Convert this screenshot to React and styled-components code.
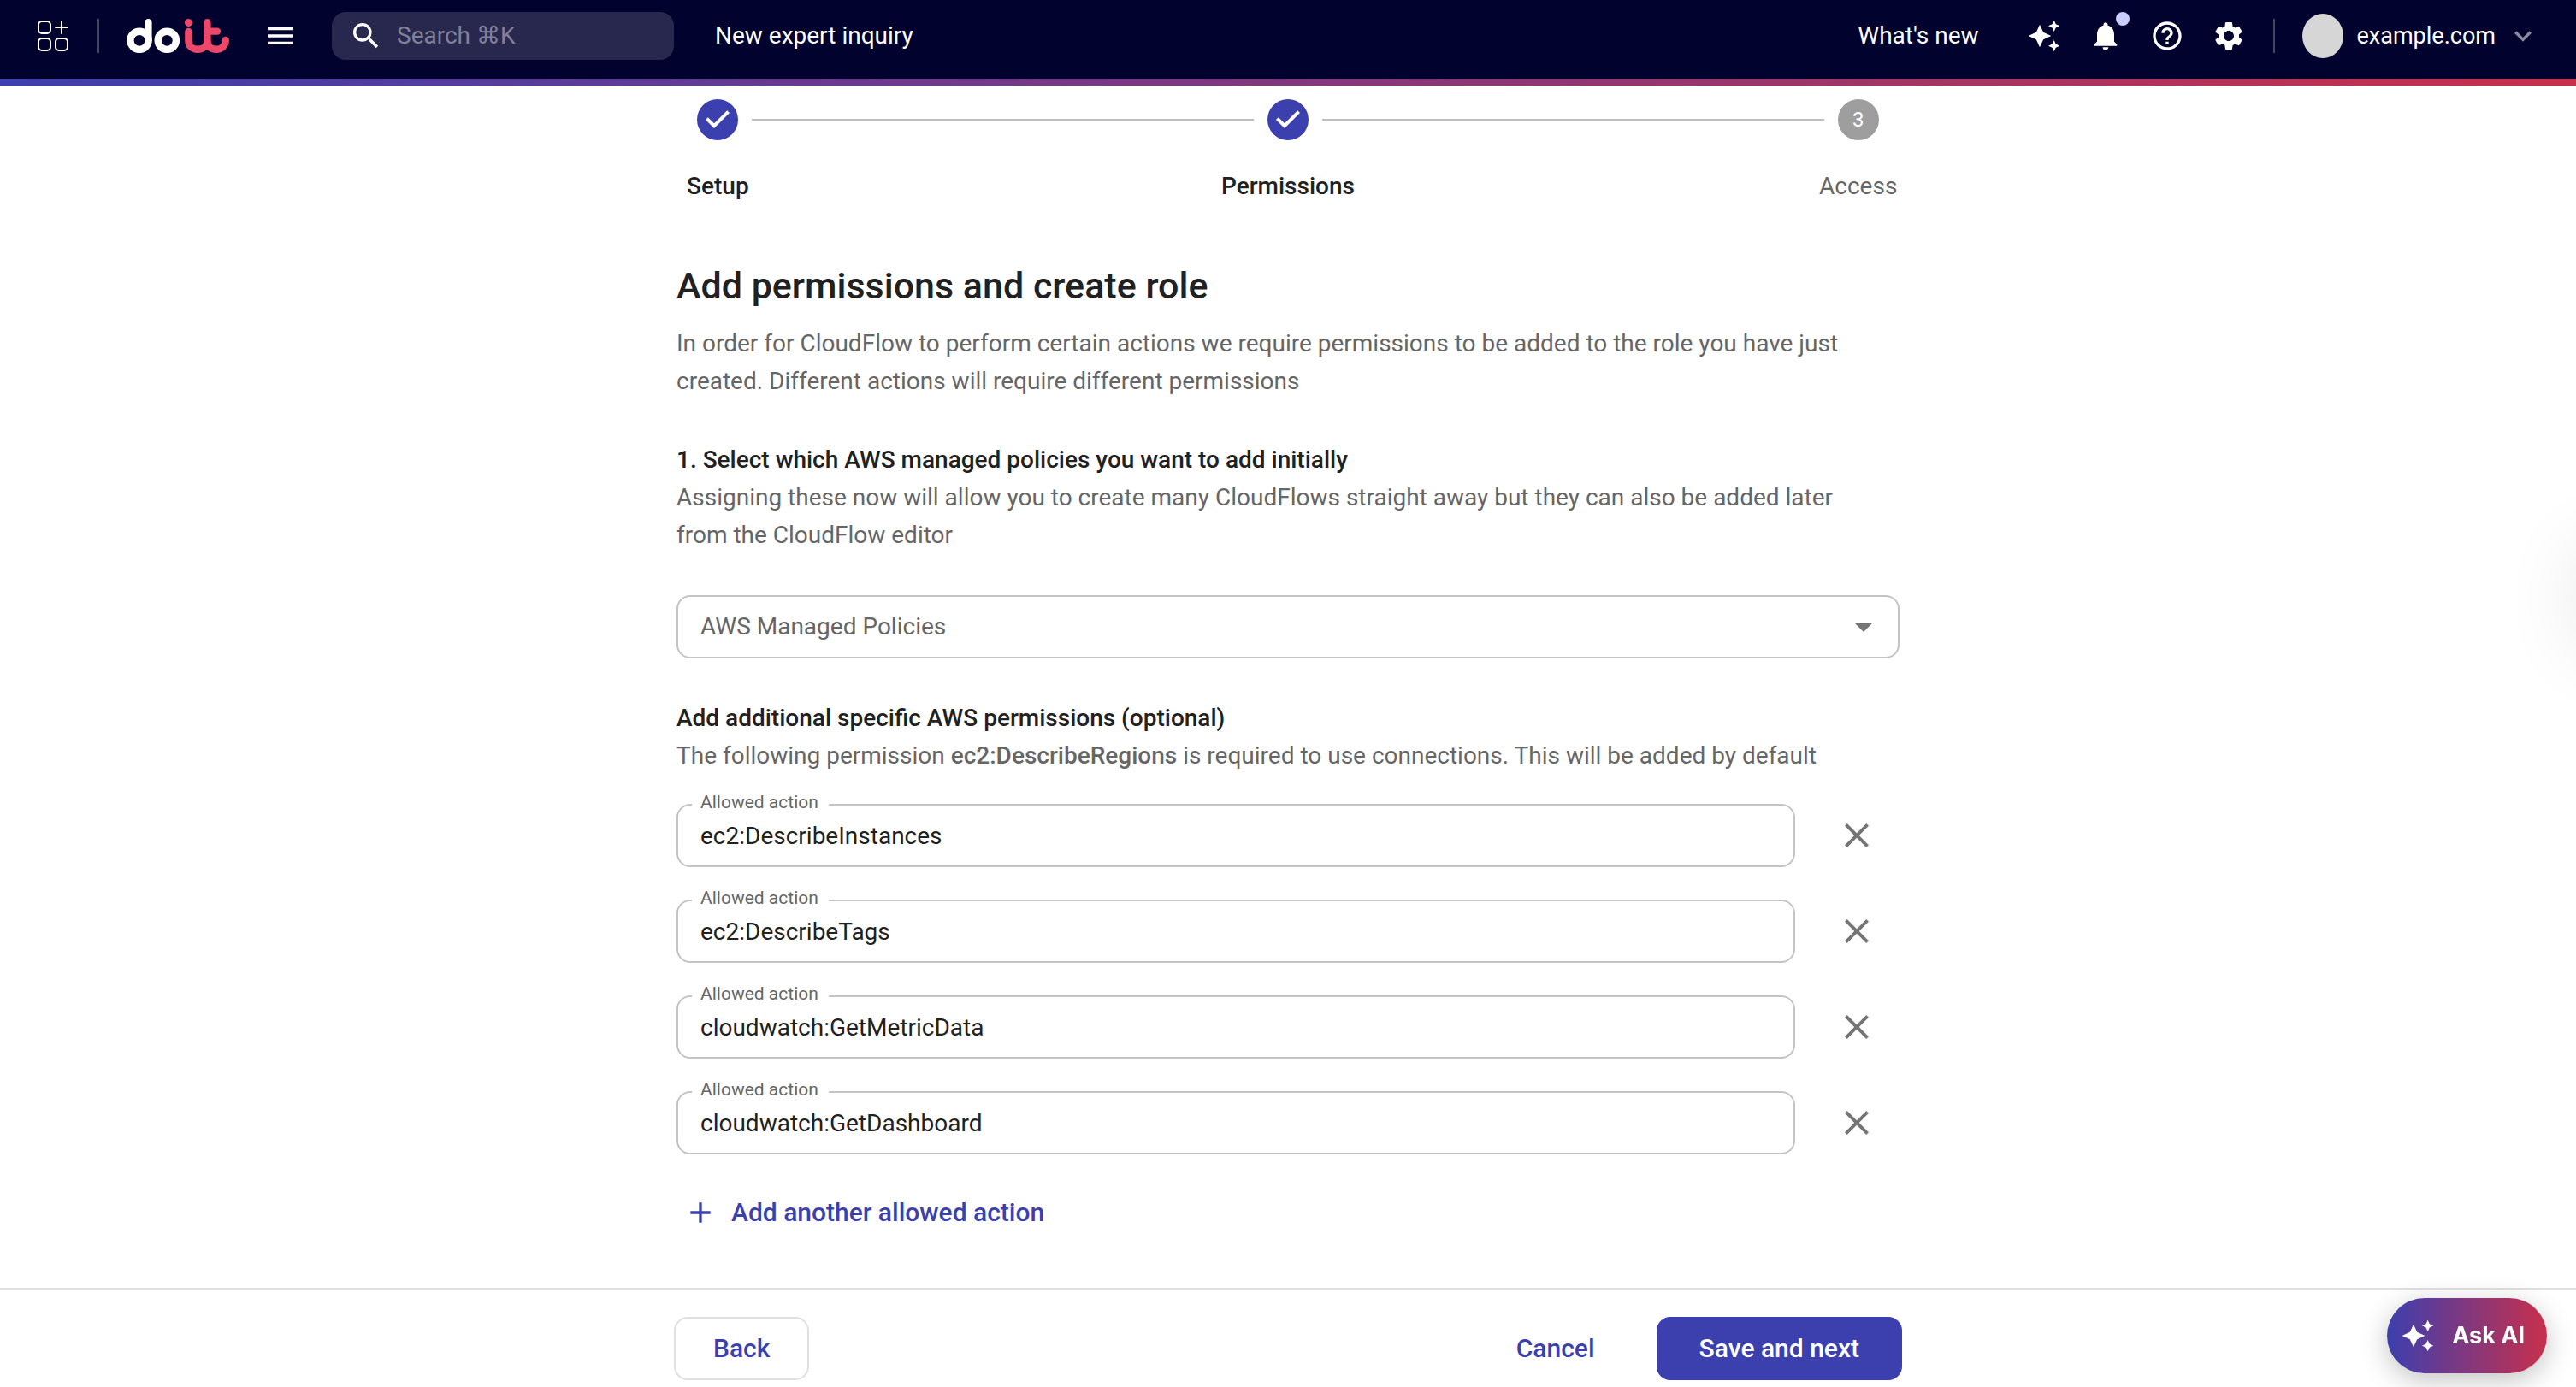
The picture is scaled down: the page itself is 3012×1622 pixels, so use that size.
import React, { useState } from 'react'

import styled, { createGlobalStyle, css } from 'styled-components'

import {
	MdAdd,
	MdArrowDropDown,
	MdAutoAwesome,
	MdClose,
	MdHelpOutline,
	MdKeyboardArrowDown,
	MdMenu,
	MdNotifications,
	MdSearch,
	MdSettings,
} from 'react-icons/md'

const GlobalStyle = createGlobalStyle`
	* {
		box-sizing: border-box;
	}

	body {
		margin: 0;
		background: #ffffff;
		color: #212121;
		font-family: Roboto, 'Liberation Sans', sans-serif;
		font-size: 28px;
		line-height: 44px;
	}

	button,
	input,
	select {
		font: inherit;
	}
`

const PlainButton = css`
	display: flex;
	align-items: center;
	justify-content: center;
	padding: 0;
	border: none;
	background: none;
	color: inherit;
	cursor: pointer;
`

const Page = styled.div`
	display: flex;
	flex-direction: column;
	min-height: 100vh;
	overflow-x: hidden;
	position: relative;
`

// Top bar
const Header = styled.header`
	background: #02022e;
	color: #ffffff;
`

const HeaderStripe = styled.div`
	height: 8px;
	background: linear-gradient(90deg, #3c3fae, #c8304c);
`

const Toolbar = styled.div`
	display: flex;
	align-items: center;
	justify-content: space-between;
	height: 92px;
	padding: 0 42px 8px;
`

const ToolbarGroup = styled.div`
	display: flex;
	align-items: center;
`

const ToolbarDivider = styled.span`
	width: 2px;
	height: 40px;
	background: #45455f;
	margin: 0 32px;
`

const IconButton = styled.button`
	${PlainButton}
	position: relative;
	font-size: 40px;
`

const MenuButton = styled(IconButton)`
	margin: 0 40px;
`

const IconRow = styled.div`
	display: flex;
	gap: 32px;
	margin-left: 56px;
`

const UnreadDot = styled.span`
	position: absolute;
	top: -8px;
	right: -8px;
	width: 16px;
	height: 16px;
	border-radius: 50%;
	background: #c9cdfc;
`

const SearchBox = styled.label`
	display: flex;
	align-items: center;
	gap: 16px;
	width: 400px;
	height: 56px;
	padding: 0 20px;
	border-radius: 16px;
	background: #28284e;
	font-size: 40px;
`

const SearchInput = styled.input`
	flex: 1;
	min-width: 0;
	border: none;
	outline: none;
	padding: 0;
	background: none;
	color: #ffffff;
	font-size: 28px;

	&::placeholder {
		color: #81819a;
		opacity: 1;
	}
`

const HeaderLink = styled.a`
	color: inherit;
	text-decoration: none;
	margin-left: ${({ $spaced }) => ($spaced ? '48px' : '0')};
`

const AccountButton = styled.button`
	${PlainButton}
	gap: 12px;
	font-size: 27px;

	svg {
		font-size: 40px;
		color: #8a8aa0;
	}
`

const Avatar = styled.span`
	width: 48px;
	height: 52px;
	margin-right: 4px;
	border-radius: 50%;
	background: #d6d6d6;
`

// Steps
const Stepper = styled.ol`
	display: grid;
	grid-template-columns: repeat(3, 1fr);
	width: 100%;
	max-width: 2000px;
	margin: 0 auto;
	padding: 16px 0 0;
	list-style: none;
`

const Step = styled.li`
	display: flex;
	flex-direction: column;
	gap: 32px;
	text-align: center;
	color: ${({ $done }) => ($done ? '#212121' : '#666666')};
	font-weight: ${({ $done }) => ($done ? 500 : 400)};
`

const StepTrack = styled.div`
	display: flex;
	align-items: center;
	gap: 16px;
`

const StepLine = styled.span`
	flex: 1;
	height: 2px;
	background: ${({ $hidden }) => ($hidden ? 'transparent' : '#bdbdbd')};
`

const StepBadge = styled.span`
	display: flex;
	align-items: center;
	justify-content: center;
	width: 48px;
	height: 48px;
	border-radius: 50%;
	background: ${({ $done }) => ($done ? '#3c3fae' : '#9e9e9e')};
	color: #ffffff;
	font-size: 24px;
`

// Form
const Content = styled.main`
	flex: 1;
	width: 100%;
	max-width: 1430px;
	margin: 0 auto;
	padding: 64px 0 52px;
`

const Title = styled.h1`
	margin: 0 0 16px;
	font-size: 43px;
	line-height: 60px;
	font-weight: 500;
`

const Description = styled.p`
	margin: 0 0 ${({ $gap }) => $gap}px;
	padding-right: 32px;
	color: #666666;

	strong {
		font-weight: 500;
	}
`

const Subtitle = styled.h2`
	margin: 0;
	font-size: 28px;
	line-height: 44px;
	font-weight: 500;
`

const SelectBox = styled.div`
	display: grid;
	align-items: center;
	margin-bottom: 48px;

	select,
	svg {
		grid-area: 1 / 1;
	}

	svg {
		justify-self: end;
		margin-right: 18px;
		font-size: 48px;
		color: #757575;
		pointer-events: none;
	}
`

const Select = styled.select`
	appearance: none;
	width: 100%;
	height: 74px;
	padding: 0 26px;
	border: 2px solid #c4c4c4;
	border-radius: 16px;
	background: #ffffff;
	color: #666666;
`

const ActionList = styled.div`
	display: flex;
	flex-direction: column;
	gap: 26px;
`

const ActionRow = styled.div`
	display: flex;
	align-items: flex-end;
	gap: 48px;
	padding-right: 26px;
`

const RemoveButton = styled.button`
	${PlainButton}
	width: 48px;
	height: 74px;
	font-size: 48px;
	color: #757575;
`

const FieldSet = styled.fieldset`
	flex: 1;
	min-width: 0;
	height: 86px;
	margin: 0;
	padding: 0 26px;
	border: 2px solid #c4c4c4;
	border-radius: 16px;
`

const FieldLegend = styled.legend`
	margin-left: -10px;
	padding: 0 12px 6px 10px;
	font-size: 21px;
	line-height: 20px;
	color: #666666;
`

const FieldInput = styled.input`
	display: block;
	width: 100%;
	height: 46px;
	padding: 0;
	border: none;
	outline: none;
	background: none;
	color: #212121;
`

const AddButton = styled.button`
	${PlainButton}
	gap: 16px;
	margin-top: 46px;
	padding: 0 8px;
	color: #3c3fae;
	font-size: 30px;
	font-weight: 500;

	svg {
		font-size: 40px;
	}
`

// Bottom bar
const Footer = styled.footer`
	border-top: 2px solid #e0e0e0;
	padding: 32px 0 8px;
`

const FooterInner = styled.div`
	display: flex;
	align-items: center;
	gap: 24px;
	width: 100%;
	max-width: 1436px;
	margin: 0 auto;
`

const FooterButton = styled.button`
	${PlainButton}
	height: 74px;
	padding: 0 48px;
	border-radius: 16px;
	color: #3c3fae;
	font-size: 30px;
	font-weight: 500;
`

const BackButton = styled(FooterButton)`
	margin-right: auto;
	padding: 0 44px;
	border: 2px solid #e0e0e0;
`

const SaveButton = styled(FooterButton)`
	padding: 0 50px;
	background: #3c3fae;
	color: #ffffff;
`

const AskButton = styled.button`
	${PlainButton}
	position: fixed;
	right: 34px;
	bottom: 16px;
	gap: 20px;
	height: 88px;
	padding: 0 26px 0 16px;
	border-radius: 44px;
	background: linear-gradient(90deg, #3c3fae, #c8304c);
	box-shadow: 0 8px 32px rgba(0, 0, 0, 0.24);
	color: #ffffff;
	font-family: Inter, Roboto, sans-serif;
	font-size: 27px;
	font-weight: 700;

	svg {
		font-size: 40px;
	}
`

// Edge of the collapsed side drawer
const DrawerShadow = styled.div`
	position: absolute;
	top: 652px;
	right: -112px;
	width: 96px;
	height: 96px;
	border-radius: 50%;
	box-shadow: 0 0 104px rgba(0, 0, 0, 0.2);
`

const AppsIcon = () => (
	<svg width='40' height='36' viewBox='0 0 40 36' fill='none' stroke='currentColor' strokeWidth='2'>
		<rect x='3' y='1' width='14' height='14' rx='4' />
		<rect x='3' y='21' width='14' height='14' rx='4' />
		<rect x='23' y='21' width='14' height='14' rx='4' />
		<path d='M30 1v14M23 8h14' strokeLinecap='round' />
	</svg>
)

const Logo = () => (
	<svg width='120' height='40' viewBox='0 0 120 40' fill='none' strokeWidth='8.4' strokeLinecap='round' strokeLinejoin='round' role='img' aria-label='doit'>
		<g stroke='#ffffff'>
			<circle cx='15' cy='25.3' r='10.6' />
			<path d='M25.4 4.2V25' />
			<circle cx='47.3' cy='25.3' r='10.6' />
		</g>
		<circle cx='72.4' cy='4.5' r='4.5' fill='#ec4869' />
		<g stroke='#ec4869'>
			<path d='M72.4 15V26C72.4 32 77 35.8 83.3 35.8C89.5 35.8 94.4 32 94.4 26V4.2' />
			<path d='M94.4 14.6H106' />
			<path d='M94.4 26C94.4 32 98.5 35.8 105 35.8C111.5 35.8 115.8 31 115.8 25' />
		</g>
	</svg>
)

const CheckIcon = () => (
	<svg width='48' height='48' viewBox='0 0 24 24' fill='currentColor' aria-hidden='true'>
		<path d='M10 17l-5-5 1.41-1.41L10 14.17l7.59-7.59L19 8l-9 9z' />
	</svg>
)

const Steps = [
	{ label: 'Setup', done: true },
	{ label: 'Permissions', done: true },
	{ label: 'Access', done: false },
]

const App = () => {
	const [Actions, SetActions] = useState([
		'ec2:DescribeInstances',
		'ec2:DescribeTags',
		'cloudwatch:GetMetricData',
		'cloudwatch:GetDashboard',
	])

	const OnChange = (index, value) => {
		SetActions(Actions.map((action, i) => (i === index ? value : action)))
	}

	const OnRemove = index => {
		SetActions(Actions.filter((action, i) => i !== index))
	}

	return (
		<>
			<GlobalStyle />
			<Page>
				<Header>
					<Toolbar>
						<ToolbarGroup>
							<IconButton aria-label='Apps'>
								<AppsIcon />
							</IconButton>
							<ToolbarDivider />
							<Logo />
							<MenuButton aria-label='Menu'>
								<MdMenu />
							</MenuButton>
							<SearchBox>
								<MdSearch />
								<SearchInput type='text' aria-label='Search' placeholder='Search ⌘K' />
							</SearchBox>
							<HeaderLink href='#inquiry' $spaced>
								New expert inquiry
							</HeaderLink>
						</ToolbarGroup>
						<ToolbarGroup>
							<HeaderLink href='#news'>What's new</HeaderLink>
							<IconRow>
								<IconButton aria-label='Assistant'>
									<MdAutoAwesome />
								</IconButton>
								<IconButton aria-label='Notifications'>
									<MdNotifications />
									<UnreadDot />
								</IconButton>
								<IconButton aria-label='Help'>
									<MdHelpOutline />
								</IconButton>
								<IconButton aria-label='Settings'>
									<MdSettings />
								</IconButton>
							</IconRow>
							<ToolbarDivider />
							<AccountButton>
								<Avatar />
								example.com
								<MdKeyboardArrowDown />
							</AccountButton>
						</ToolbarGroup>
					</Toolbar>
					<HeaderStripe />
				</Header>
				<Stepper>
					{Steps.map((step, index) => (
						<Step key={step.label} $done={step.done}>
							<StepTrack>
								<StepLine $hidden={index === 0} />
								<StepBadge $done={step.done}>{step.done ? <CheckIcon /> : index + 1}</StepBadge>
								<StepLine $hidden={index === Steps.length - 1} />
							</StepTrack>
							{step.label}
						</Step>
					))}
				</Stepper>
				<Content>
					<Title>Add permissions and create role</Title>
					<Description $gap={48}>
						In order for CloudFlow to perform certain actions we require permissions to be added to the role you have
						just created. Different actions will require different permissions
					</Description>
					<Subtitle>1. Select which AWS managed policies you want to add initially</Subtitle>
					<Description $gap={48}>
						Assigning these now will allow you to create many CloudFlows straight away but they can also be added later
						from the CloudFlow editor
					</Description>
					<SelectBox>
						<Select aria-label='AWS Managed Policies' defaultValue=''>
							<option value=''>AWS Managed Policies</option>
						</Select>
						<MdArrowDropDown />
					</SelectBox>
					<Subtitle>Add additional specific AWS permissions (optional)</Subtitle>
					<Description $gap={22}>
						The following permission <strong>ec2:DescribeRegions</strong> is required to use connections. This will be
						added by default
					</Description>
					<ActionList>
						{Actions.map((action, index) => (
							<ActionRow key={index}>
								<FieldSet>
									<FieldLegend>
										<label htmlFor={`action-${index}`}>Allowed action</label>
									</FieldLegend>
									<FieldInput
										type='text'
										id={`action-${index}`}
										value={action}
										onChange={event => OnChange(index, event.target.value)}
									/>
								</FieldSet>
								<RemoveButton aria-label='Remove' onClick={() => OnRemove(index)}>
									<MdClose />
								</RemoveButton>
							</ActionRow>
						))}
					</ActionList>
					<AddButton onClick={() => SetActions([...Actions, ''])}>
						<MdAdd />
						Add another allowed action
					</AddButton>
				</Content>
				<Footer>
					<FooterInner>
						<BackButton>Back</BackButton>
						<FooterButton>Cancel</FooterButton>
						<SaveButton>Save and next</SaveButton>
					</FooterInner>
				</Footer>
				<DrawerShadow />
				<AskButton>
					<MdAutoAwesome />
					Ask AI
				</AskButton>
			</Page>
		</>
	)
}

export default App
